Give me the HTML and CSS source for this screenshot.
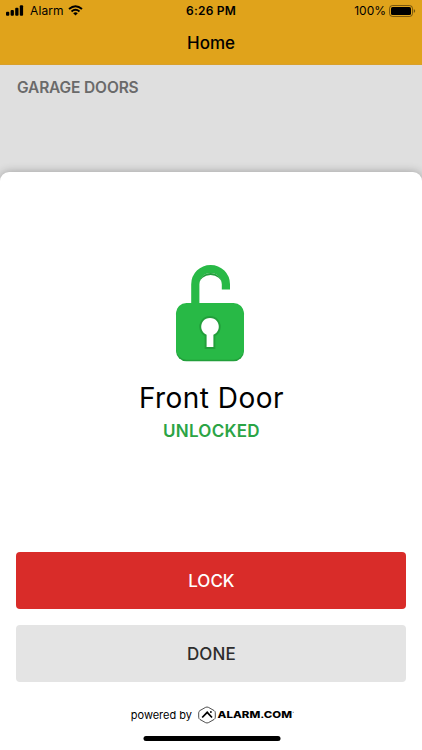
FILE: index.html
```html
<!DOCTYPE html>
<html lang="en">
<head>
    <meta charset="UTF-8">
    <meta name="viewport" content="width=device-width, initial-scale=1.0">
    <title>Home</title>
    <link rel="stylesheet" href="styles.css">
</head>
<body>
    <div class="app">
        <header class="header">
            <div class="status-bar">
                <div class="status-left">
                    <svg class="signal" width="18" height="11" viewBox="0 0 18 11">
                        <rect x="0" y="6.7" width="3.3" height="4" rx="1"/>
                        <rect x="4.6" y="4.9" width="3.3" height="5.8" rx="1"/>
                        <rect x="9.2" y="2.7" width="3.3" height="8" rx="1"/>
                        <rect x="13.8" y="0.3" width="3.3" height="10.4" rx="1"/>
                    </svg>
                    <span class="carrier">Alarm</span>
                    <svg class="wifi" width="15" height="11" viewBox="0 0 15 11">
                        <path d="M1 4Q7.5-1.6 14 4M3.5 6.5Q7.5 3.2 11.5 6.5" fill="none" stroke="#000" stroke-width="1.9"/>
                        <path d="M5.2 8.2Q7.5 6.4 9.8 8.2L7.5 10.6z"/>
                    </svg>
                </div>
                <span class="clock">6:26 PM</span>
                <div class="status-right">
                    <span class="percent">100%</span>
                    <svg class="battery" width="27" height="12" viewBox="0 0 27 12">
                        <rect x="0.5" y="0.5" width="23" height="11" rx="3" fill="none" stroke="#000" stroke-opacity=".45"/>
                        <rect x="2" y="2" width="20" height="8" rx="1.6"/>
                        <path d="M24.8 4Q27.6 6 24.8 8z" fill-opacity=".5"/>
                    </svg>
                </div>
            </div>
            <h1 class="title">Home</h1>
        </header>

        <section class="backdrop">
            <h2 class="section-title">GARAGE DOORS</h2>
        </section>

        <main class="sheet">
            <div class="device">
                <svg class="lock-icon" width="70" height="98" viewBox="0 0 70 98">
                    <path d="M20.3 42V20.3a15.3 15.3 0 0 1 30.6 0V25.6" fill="none" stroke="#28b946" stroke-width="8.2"/>
                    <!-- inner shade of the shackle -->
                    <path d="M24.3 20.3a11.3 11.3 0 0 1 22.6 0a11.3 9.4 0 0 0-22.6 0z" fill="#229f3b"/>
                    <rect x="1" y="40" width="68" height="57.3" rx="10.5" fill="#229f3b"/>
                    <rect x="1" y="39" width="68" height="56.7" rx="10.5" fill="#28b946"/>
                    <path d="M31.6 70.8a8.8 8.8 0 1 1 6.8 0V83h-6.8z" fill="#fff" stroke="#229f3b" stroke-width="3.8"/>
                    <path d="M31.6 70.8a8.8 8.8 0 1 1 6.8 0V83h-6.8z" fill="#fff"/>
                </svg>
                <div class="device-name">Front Door</div>
                <div class="device-state">UNLOCKED</div>
            </div>
            <div class="actions">
                <button class="button button-lock">LOCK</button>
                <button class="button button-done">DONE</button>
            </div>
            <footer class="footer">
                <span class="powered">powered by</span>
                <svg class="logo" width="97" height="18" viewBox="0 0 97 18">
                    <path d="M7.5 1.4Q9 .6 10.5 1.4L16 4.5Q17.3 5.3 17.3 6.8V11.2Q17.3 12.7 16 13.5L10.5 16.6Q9 17.4 7.5 16.6L2 13.5Q.7 12.7.7 11.2V6.8Q.7 5.3 2 4.5z" fill="none" stroke="#222" stroke-width=".8"/>
                    <path d="M4.2 11.5L9.2 6.3L14 11.5" fill="none" stroke="#000" stroke-width="1.7"/>
                    <circle cx="12.9" cy="6" r=".9"/>
                    <text class="logo-text" x="19.6" y="12.2" textLength="74.5" lengthAdjust="spacingAndGlyphs">ALARM.COM</text>
                    <circle cx="95.2" cy="6.2" r=".5" fill="#555"/>
                </svg>
            </footer>
            <div class="home-indicator"></div>
        </main>
    </div>
</body>
</html>
```
FILE: styles.css
```css
*{margin:0;padding:0;box-sizing:border-box}
body{font-family:Inter,"Liberation Sans",sans-serif;background:#dfdfdf;color:#000}
.app{display:flex;flex-direction:column;width:100%;height:750px;overflow:hidden}
svg{display:block;flex:none}

/* Header */
.header{height:65px;background:#e0a31b;border-bottom:1px solid #d9a02b;flex:none}
.status-bar{display:grid;grid-template-columns:1fr auto 1fr;align-items:center;height:21px;padding:0 6px 0 6px}
.status-left,.status-right{display:flex;align-items:center}
.status-right{justify-content:flex-end}
.carrier{margin-left:6px;font-size:12px;letter-spacing:.1px}
.wifi{margin-left:4px}
.clock{font-size:12px;font-weight:600;letter-spacing:.2px}
.percent{margin-right:3px;font-size:12px}
.title{height:44px;font-size:17px;font-weight:500;line-height:44px;text-align:center}

/* Page behind the sheet */
.backdrop{height:107px;padding:13px 17px;background:#dfdfdf;flex:none}
.section-title{font-size:15.5px;font-weight:600;line-height:20px;letter-spacing:-.15px;color:#6a6a6a}

/* Sheet */
.sheet{display:flex;flex-direction:column;flex:1;padding:0 15.6px 0 16.4px;background:#fff;border-radius:9px 9px 0 0;box-shadow:0 0 10px rgba(0,0,0,.3)}
.device{display:flex;flex-direction:column;align-items:center;height:380px;padding-top:92px}
.lock-icon{margin-right:3px}
.device-name{margin-top:18px;font-size:28px;line-height:36px;letter-spacing:.45px}
.device-state{margin-top:4px;font-size:17px;font-weight:600;line-height:22px;letter-spacing:.25px;color:#2ba445}
.actions{display:flex;flex-direction:column;gap:16.4px}
.button{height:57px;border:none;border-radius:4px;font-family:inherit;font-size:17px;font-weight:500;cursor:pointer}
.button-lock{background:#d92c29;color:#fff}
.button-done{background:#e4e4e4;color:#2d2d2d;letter-spacing:.1px}
.footer{display:flex;justify-content:center;align-items:center;gap:6px;height:18px;margin:24px 0 0 3px}
.powered{font-size:11px}
.logo-text{font-size:9px;font-weight:800}
.home-indicator{width:137px;height:5px;margin:11.5px auto 0;border-radius:3px;background:#000;transform:translateX(.5px)}
```
